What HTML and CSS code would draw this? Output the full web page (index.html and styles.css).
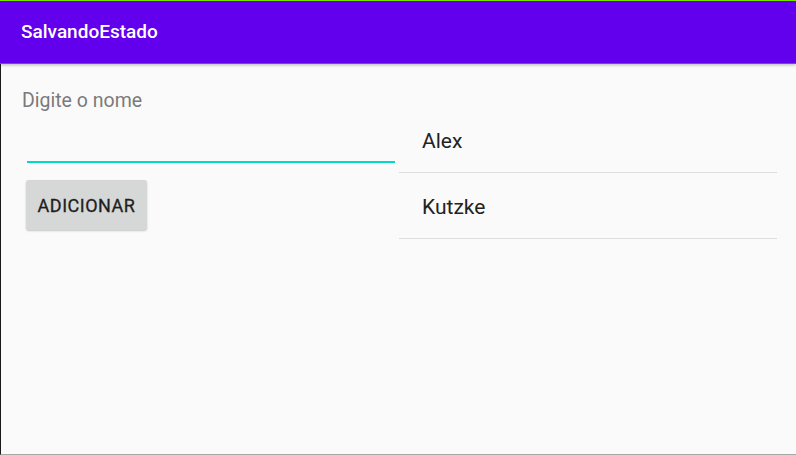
FILE: index.html
```html
<!DOCTYPE html>
<html lang="pt">
<head>
<meta charset="utf-8">
<title>SalvandoEstado</title>
<link rel="stylesheet" href="styles.css">
</head>
<body>
<div class="window">
  <header class="appbar">
    <h1 class="title">SalvandoEstado</h1>
  </header>
  <main class="content">
    <section class="form">
      <label class="hint" for="nome">Digite o nome</label>
      <div class="field"><input id="nome" class="input" type="text"></div>
      <button class="btn" type="button">ADICIONAR</button>
    </section>
    <ul class="list">
      <li class="item">Alex</li>
      <li class="item">Kutzke</li>
    </ul>
  </main>
</div>
</body>
</html>
```
FILE: styles.css
```css
* { box-sizing: border-box; }
html, body { margin: 0; padding: 0; }
body {
  width: 796px;
  height: 455px;
  overflow: hidden;
  background: #fafafa;
  font-family: Roboto, "Liberation Sans", sans-serif;
}
.window {
  width: 796px;
  height: 455px;
  display: flex;
  flex-direction: column;
  border-top: 1px solid #7cf000;
}
.appbar {
  position: relative;
  height: 63px;
  flex: none;
  background: #6200ee;
  border-bottom: 1px solid #7d3cf0;
  box-shadow: 0 1px 3px rgba(0,0,0,0.28);
  z-index: 1;
}
.title {
  margin: 0;
  padding: 19px 0 0 21px;
  font-size: 19px;
  font-weight: 500;
  line-height: 24px;
  color: #ffffff;
}
.content {
  flex: 1;
  display: grid;
  grid-template-columns: 373px 378px;
  column-gap: 4px;
  padding: 0 19px 0 21px;
  border-left: 1px solid #1a1a1a;
  border-bottom: 1px solid #a8a8a8;
}
.form {
  display: flex;
  flex-direction: column;
  align-items: flex-start;
  padding-top: 25px;
}
.hint {
  font-size: 19.5px;
  line-height: 24px;
  color: #7a7a7a;
}
.field {
  width: 368px;
  height: 50px;
  margin-left: 5px;
  border-bottom: 2.5px solid #03dac5;
}
.input {
  width: 100%;
  height: 100%;
  border: 0;
  background: transparent;
  outline: none;
  font: inherit;
}
.btn {
  margin: 17px 0 0 4px;
  width: 121px;
  height: 50px;
  padding: 0;
  border: 0;
  border-radius: 3px;
  background: #d6d7d7;
  box-shadow: 0 1px 2px rgba(0,0,0,0.22);
  font-family: Roboto, "Liberation Sans", sans-serif;
  font-size: 18px;
  font-weight: 400;
  letter-spacing: 0.5px;
  -webkit-text-stroke: 0.3px #1e1e1e;
  color: #1e1e1e;
}
.list {
  list-style: none;
  margin: 43px 0 0;
  padding: 0;
}
.item {
  height: 66px;
  padding: 3px 0 0 23px;
  line-height: 62px;
  font-size: 21px;
  color: #222222;
  border-bottom: 1.5px solid #dedede;
}
```
